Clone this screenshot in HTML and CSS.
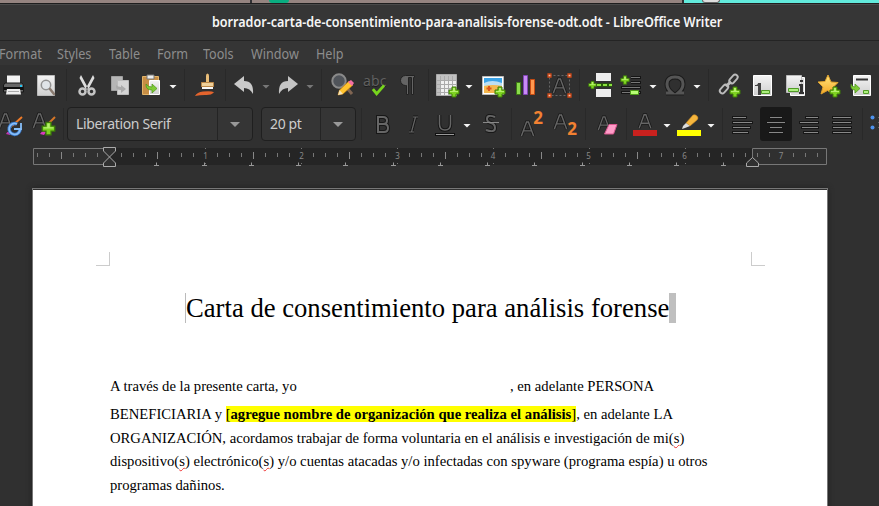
FILE: index.html
```html
<!DOCTYPE html>
<html lang="es">
<head>
<meta charset="utf-8">
<title>borrador-carta-de-consentimiento-para-analisis-forense-odt.odt - LibreOffice Writer</title>
<link rel="stylesheet" href="styles.css">
</head>
<body>
<svg class="defs" width="0" height="0" aria-hidden="true">
  <defs>
    <linearGradient id="paper" x1="0" y1="0" x2="0" y2="1"><stop offset="0" stop-color="#f4f4f4"/><stop offset="1" stop-color="#cfcfcf"/></linearGradient>
    <linearGradient id="gold" x1="0" y1="0" x2="0" y2="1"><stop offset="0" stop-color="#ffe680"/><stop offset="1" stop-color="#f5a623"/></linearGradient>
    <symbol id="plus" viewBox="0 0 12 12"><path d="M4 1h4v3h3v4H8v3H4V8H1V4h3z" fill="#7ed321" stroke="#3c7a08"/><path d="M5 2h2v3h3v1H2V5h3z" fill="#b5f06c"/></symbol>
    <symbol id="letter" viewBox="0 0 16 18"><path d="M1.500 17 7 2h2l5.500 15M4 11.500h8" fill="none" stroke="#191919" stroke-width="3.200"/><path d="M1.500 17 7 2h2l5.500 15M4 11.500h8" fill="none" stroke="#666" stroke-width="1.500"/></symbol>
  </defs>
</svg>
<div class="backdrop"><i class="left"></i><i class="mid"><b></b></i><i class="right"><b></b></i></div>
<header class="title"><span>borrador-carta-de-consentimiento-para-analisis-forense-odt.odt - LibreOffice Writer</span></header>
<nav class="menu"><span>Format</span><span>Styles</span><span>Table</span><span>Form</span><span>Tools</span><span>Window</span><span>Help</span></nav>

<div class="bar standard">
  <svg class="ic" viewBox="0 0 24 24"><path d="M6 2.500h13v8H6z" fill="#f3f3f3"/><path d="M4 10h17l1.500 2v7h-20v-7z" fill="#686868" stroke="#181818"/><path d="M3 14h19v3H3z" fill="#111"/><path d="M19 12h2v2h-2z" fill="#20c4f4"/><path d="M6 16h13l1 5.500H5z" fill="#eee"/><path d="M7 18.500h11" stroke="#aaa"/></svg>
  <svg class="ic" viewBox="0 0 24 24"><path d="M3.500 2.500h17v20h-17z" fill="url(#paper)" stroke="#bbb"/><circle cx="12" cy="12" r="4.700" fill="#e0e4e8" stroke="#929292" stroke-width="1.500"/><path d="m16 16 4 5" stroke="#8a7b70" stroke-width="2.500" stroke-linecap="round"/></svg>
  <i class="sep"></i>
  <svg class="ic" viewBox="0 0 24 24"><path d="M6 2 4.500 5 11 17l2-2zM18 2l1.500 3L13 17l-2-2z" fill="#ddd"/><g fill="none" stroke="#c4c4c4" stroke-width="2.500"><circle cx="7.500" cy="18.500" r="3"/><circle cx="16.500" cy="18.500" r="3"/></g></svg>
  <svg class="ic" viewBox="0 0 24 24"><path d="M3.500 3.500h11v14h-11z" fill="#b6b6b6" stroke="#a0a0a0"/><path d="M9.500 7.500h11v14h-11z" fill="#d4d4d4" stroke="#bbb"/><path d="M8 12v2q0 3 5 3v3l5-4-5-4v2q-3 0-5-2" fill="#aaa"/></svg>
  <svg class="ic" viewBox="0 0 24 24"><path d="M3.500 3.500h16v18h-16z" fill="#c78e45" stroke="#e3b468"/><path d="M8 2h7v4H8z" fill="#eee" stroke="#777"/><path d="M10.500 7.500h10v14h-10z" fill="url(#paper)" stroke="#fff"/><path d="M7 11v1q0 5 6 5v3l5-4.500-5-4.500v3q-4 0-6-3" fill="#7ecb35" stroke="#4c9418" stroke-width=".7"/></svg>
  <i class="arrow"></i><i class="sep"></i>
  <svg class="ic" viewBox="0 0 24 24"><path d="M12 9V3q0-2.500 1.500-2.500T15 3v6z" fill="#e9bd78"/><path d="M7.500 9.500h12v4h-12z" fill="#efd09a" stroke="#bb8747"/><path d="M8 14h11v2H8z" fill="#f7f7f7"/><path d="M1 23q2-4 8-4.500 9-1 11 1-3 3-9 2.500-5 0-10 1z" fill="#e4642d"/></svg>
  <i class="sep"></i>
  <svg class="ic" viewBox="0 0 24 24"><path d="M2 11 12 3v5q10 0 9 13-3-6-9-6v4z" fill="#cacaca"/></svg>
  <i class="arrow dim"></i>
  <svg class="ic" viewBox="0 0 24 24"><path d="M22 11 12 3v5Q2 8 3 21q3-6 9-6v4z" fill="#c4c4c4"/></svg>
  <i class="arrow dim"></i><i class="sep"></i>
  <svg class="ic" viewBox="0 0 24 24"><path d="m16 15 5 6" stroke="#806552" stroke-width="3"/><circle cx="8" cy="8" r="6.700" fill="#50545a" stroke="#8a8a8a" stroke-width="2"/><path d="m7 22 1.500-5L18 8l4 4-10 9z" fill="#ffc32e" stroke="#ba7810" stroke-width=".7"/><path d="m17 9 3-2 3 3-2 3z" fill="#f36fa5"/><path d="m7 22 1.500-5 3.500 4z" fill="#f7e3b8"/></svg>
  <div class="ic spell">abc<svg viewBox="0 0 16 12"><path d="m2 5 4 5 8-9" fill="none" stroke="#77d51d" stroke-width="3"/></svg></div>
  <svg class="ic" viewBox="0 0 24 24"><path d="M18.500 2.500h-9a5 5 0 0 0 0 10h1v9h2v-17h3v17h2v-17h1z" fill="#646464" stroke="#222"/></svg>
  <i class="sep"></i>
  <svg class="ic" viewBox="0 0 24 24"><path d="M1.500 1.500h20v21h-20z" fill="#f0f0f0" stroke="#aaa"/><path d="M2 2h19v5H2zM2 7h3v15H2z" fill="#c1c1c1"/><path d="M1 7.500h20M1 11.500h20M1 15.500h20M1 19.500h20M5.500 3v19M9.500 3v19M13.500 3v19M17.500 3v19" stroke="#aaa"/><use href="#plus" x="13" y="13" width="12" height="12"/></svg>
  <i class="arrow"></i>
  <svg class="ic" viewBox="0 0 24 24"><path d="M1.500 3.500h21v18h-21z" fill="#fff" stroke="#bbb"/><path d="M3 5h18v8H3z" fill="#3ba3e7"/><path d="M3 10q8-4 18 0v3H3z" fill="#bcdff4"/><path d="M3 13q9-2 18 0v7H3z" fill="#f4b84e"/><path d="M8 13v5M5.500 15.500h5" stroke="#dd551c" stroke-width="2"/><use href="#plus" x="13" y="13" width="12" height="12"/></svg>
  <svg class="ic" viewBox="0 0 24 24"><path d="M2.500 9.500h4v12h-4z" fill="#8bdc4c" stroke="#3d7b13"/><path d="M9.500 2.500h4v19h-4z" fill="#c78bf4" stroke="#8145b5"/><path d="M16.500 6.500h4v15h-4z" fill="#ff984f" stroke="#c64b12"/></svg>
  <svg class="ic" viewBox="0 0 24 24"><path d="M2.500 2.500h20v20h-20z" fill="none" stroke="#666" stroke-dasharray="2 2"/><use href="#letter" x="5" y="4" width="15" height="17"/><g fill="#f6c8b3" stroke="#cb4817" stroke-width="1.300"><path d="M1 1h3v3H1zM21 1h3v3h-3zM1 21h3v3H1zM21 21h3v3h-3z"/></g></svg>
  <i class="sep"></i>
  <svg class="ic" viewBox="0 0 24 24"><path d="M7 0h15v8H7zM7 16h15v8H7z" fill="#eee"/><path d="M8 12h15" stroke="#285d08" stroke-width="3.500"/><path d="M8 12h15" stroke="#8ae33d" stroke-width="2" stroke-dasharray="4 2"/><use href="#plus" x="-1" y="7.500" width="9" height="9"/></svg>
  <svg class="ic" viewBox="0 0 24 24"><path d="M12 4.500h10M12 9.500h10M2 14.500h20M2 19.500h20" stroke="#151515" stroke-width="3"/><path d="M12 4.500h9M12 9.500h9M3 14.500h18M3 19.500h18" stroke="#777"/><path d="M11.500 17.500h8v4h-8z" fill="#b8ff75" stroke="#4e9e18"/><use href="#plus" x="1" y="2" width="10" height="10"/></svg>
  <i class="arrow"></i>
  <svg class="ic" viewBox="0 0 24 24"><path d="M3 20h6q-5-4-5-9 0-7 8-7t8 7q0 5-5 9h6" fill="none" stroke="#1c1c1c" stroke-width="5"/><path d="M3 20h6q-5-4-5-9 0-7 8-7t8 7q0 5-5 9h6" fill="none" stroke="#555" stroke-width="3"/></svg>
  <i class="arrow"></i><i class="sep"></i>
  <svg class="ic" viewBox="0 0 24 24"><g fill="none" stroke="#bbb" stroke-width="1.900"><rect x="-5" y="-2.500" width="10" height="5" rx="2.500" transform="translate(15.500 6)rotate(-48)"/><rect x="-5" y="-2.500" width="10" height="5" rx="2.500" transform="translate(6 16)rotate(-48)"/><path d="m8 13.500 5-5" stroke-width="3"/></g><use href="#plus" x="11" y="13" width="12" height="12"/></svg>
  <svg class="ic" viewBox="0 0 24 24"><path d="M3.500 2.500h18v20h-18z" fill="url(#paper)" stroke="#fff"/><path d="M5 12q3 0 3-2h3v12H8v-9H5z" fill="#444"/><path d="M11.500 17.500h8v3h-8z" fill="#adf080" stroke="#519b26"/></svg>
  <svg class="ic" viewBox="0 0 24 24"><path d="M7.500 4.500h14v18h-14z" fill="#ddd" stroke="#fff"/><path d="M3.500 2.500h15v17h-15z" fill="url(#paper)" stroke="#bbb"/><path d="M17 7h3v2h-3zM16 11h4v8h1v2h-5v-2h1v-6h-1z" fill="#333"/><path d="M5.500 15.500h10v3h-10z" fill="#adf080" stroke="#519b26"/></svg>
  <svg class="ic" viewBox="0 0 24 24"><path d="m12 2 3 7 7 .5-5 5 1 7-6.500-4L5 21l2-7-5-5 7-.5z" fill="url(#gold)" stroke="#e0a32d"/><use href="#plus" x="13" y="13" width="12" height="12"/></svg>
  <svg class="ic" viewBox="0 0 24 24"><path d="M4.500 2.500h17v20h-17z" fill="url(#paper)" stroke="#fff"/><path d="M7 6.500h12" stroke="#333" stroke-width="2"/><path d="M2 11q1 3 4 3v-3l5 4.500L6 20v-3q-5 0-4-6" fill="#7ecb35" stroke="#4c9418" stroke-width=".7"/><path d="M14.500 17.500h5v3h-5z" fill="#adf080" stroke="#519b26"/></svg>
</div>

<div class="bar formatting">
  <svg class="ic" viewBox="0 0 24 24"><use href="#letter" x="-2" y="0" width="15" height="17"/><path d="m12 14 10-9" stroke="#ef7b28" stroke-width="2"/><path d="M6 22q2-4 5-2l-1 3z" fill="#c734af"/><path d="M20 16a5.500 5.500 0 1 1-3-4" fill="none" stroke="#3978c9" stroke-width="3.500"/><path d="M20 16a5.500 5.500 0 1 1-3-4M14 17h7v-6" fill="none" stroke="#87bff9" stroke-width="1.800"/></svg>
  <svg class="ic" viewBox="0 0 24 24"><use href="#letter" x="-1" y="0" width="15" height="17"/><path d="m14 13 8-8" stroke="#d67627" stroke-width="2"/><path d="M7 22q2-4 6-2l-2 3z" fill="#d83bbd"/><use href="#plus" x="8" y="9" width="15" height="15"/></svg>
  <i class="sep"></i>
  <div class="combo name"><span>Liberation Serif</span><i class="arrow"></i></div>
  <div class="combo size"><span>20 pt</span><i class="arrow"></i></div>
  <i class="sep"></i>
  <svg class="ic emb" viewBox="0 0 24 24"><path d="M8 5h5q4 0 4 3.500T13 12H8zm0 7h6q4 0 4 4t-4 4H8z" stroke-width="4" stroke="#171717"/><path d="M8 5h5q4 0 4 3.500T13 12H8zm0 7h6q4 0 4 4t-4 4H8z" stroke-width="2"/></svg>
  <svg class="ic emb" viewBox="0 0 24 24"><path d="M12 5h5M8 20h5M14.500 5l-4 15" stroke-width="3" stroke="#171717"/><path d="M12 5h5M8 20h5M14.500 5l-4 15" stroke-width="1.200"/></svg>
  <svg class="ic emb" viewBox="0 0 24 24"><path d="M6.500 3v9q0 6 5.500 6t5.500-6V3" stroke-width="3.500" stroke="#171717"/><path d="M6.500 3v9q0 6 5.500 6t5.500-6V3" stroke-width="1.500"/><path d="M2 22.500h20" stroke="#111" stroke-width="3"/><path d="M3 22.500h18" stroke="#999"/></svg>
  <i class="arrow"></i>
  <svg class="ic emb" viewBox="0 0 24 24"><path d="M16 5q-8-3-8 2 0 3 4 4t4 5q0 5-9 2" stroke-width="4" stroke="#171717"/><path d="M16 5q-8-3-8 2 0 3 4 4t4 5q0 5-9 2" stroke-width="2"/><path d="M4 10.500h16" stroke="#888"/></svg>
  <i class="sep"></i>
  <div class="ic script sup"><svg viewBox="0 0 16 18"><use href="#letter"/></svg><b>2</b></div>
  <div class="ic script sub"><svg viewBox="0 0 16 18"><use href="#letter"/></svg><b>2</b></div>
  <i class="sep"></i>
  <svg class="ic" viewBox="0 0 24 24"><use href="#letter" x="1" y="3" width="14" height="16"/><path d="M13 12.500h8L17.500 22h-9z" fill="#ff9cc8" stroke="#d8578e"/></svg>
  <i class="sep"></i>
  <svg class="ic" viewBox="0 0 24 24"><use href="#letter" x="4" y="1" width="16" height="16"/><path d="M0 18h24v6H0z" fill="#c9211e"/></svg>
  <i class="arrow"></i>
  <svg class="ic" viewBox="0 0 24 24"><path d="M0 18h24v6H0z" fill="#ff0"/><path d="m9 11 7-8q2-1 4 1t0 4l-7 6z" fill="#f6b63d" stroke="#c28422" stroke-width=".6"/><path d="m9 11 4 3-5 2-3 1 1-3z" fill="#ddd"/></svg>
  <i class="arrow"></i><i class="sep"></i>
  <svg class="ic al" viewBox="0 0 24 24"><path class="sh" d="M2 5.500h15M2 10.500h21M2 15.500h19M2 20.500h17"/><path d="M3 5.500h13M3 10.500h19M3 15.500h17M3 20.500h15"/></svg>
  <div class="pressed"><svg class="ic al" viewBox="0 0 24 24"><path class="sh" d="M5 5.500h14M2 10.500h20M5 15.500h14M4 20.500h16"/><path d="M6 5.500h12M3 10.500h18M6 15.500h12M5 20.500h14"/></svg></div>
  <svg class="ic al" viewBox="0 0 24 24"><path class="sh" d="M8 5.500h14M2 10.500h20M4 15.500h18M6 20.500h16"/><path d="M9 5.500h12M3 10.500h18M5 15.500h16M7 20.500h14"/></svg>
  <svg class="ic al" viewBox="0 0 24 24"><path class="sh" d="M2 5.500h20M2 10.500h20M2 15.500h20M2 20.500h20"/><path d="M3 5.500h18M3 10.500h18M3 15.500h18M3 20.500h18"/></svg>
  <i class="sep"></i>
  <svg class="ic" viewBox="0 0 24 24"><circle cx="2.500" cy="5.500" r="2" fill="#4d91ec"/><circle cx="2.500" cy="15.500" r="2" fill="#4d91ec"/><path d="M8 5.500h10M8 10.500h10M8 15.500h10" stroke="#666"/></svg>
</div>

<svg class="ruler" viewBox="0 0 796 20">
  <defs>
    <pattern id="tick" x="4" width="12" height="20" patternUnits="userSpaceOnUse"><path d="M.5 6v4" stroke="#777"/></pattern>
    <pattern id="half" x="28" width="96" height="20" patternUnits="userSpaceOnUse"><path d="M.5 5v7" stroke="#888"/></pattern>
  </defs>
  <path d="M77 1h643v17H77z" fill="#252525"/>
  <path d="M77 1.500H.5v16H77M719.500 12V1.500h74v16H725" fill="none" stroke="#777"/>
  <path d="M3 0h70v20H3zM81 0h710v20H81z" fill="url(#tick)"/>
  <path d="M20 0h50v20H20zM100 0h600v20H100z" fill="url(#half)"/>
  <path d="M121 18.500h5m-2.500-3v3M169 18.500h5m-2.500-3v3M216 18.500h5m-2.500-3v3M263 18.500h5m-2.500-3v3M310 18.500h5m-2.500-3v3M358 18.500h5m-2.500-3v3M405 18.500h5m-2.500-3v3M452 18.500h5m-2.500-3v3M499 18.500h5m-2.500-3v3M547 18.500h5m-2.500-3v3M594 18.500h5m-2.500-3v3M641 18.500h5m-2.500-3v3M688 18.500h5m-2.500-3v3" fill="none" stroke="#999"/>
  <g class="num"><path d="M169 4h8v9h-8zM265 4h8v9h-8zM361 4h8v9h-8zM457 4h8v9h-8zM553 4h8v9h-8zM648 4h8v9h-8z"/><path class="light" d="M744 4h8v9h-8z"/>
  <text x="172.500" y="12">1</text><text x="268.500" y="12">2</text><text x="364.500" y="12">3</text><text x="460" y="12">4</text><text x="555.500" y="12">5</text><text x="651.500" y="12">6</text><text x="748" y="12">7</text></g>
  <path d="M172.500 1v1m0 14v1M268.500 1v1m0 14v1M364.500 1v1m0 14v1M460.500 1v1m0 14v1M556.500 1v1m0 14v1M652.500 1v1m0 14v1" stroke="#777"/>
  <path d="M70.500.500h12V4l-12 12v3.500h12V16L70.500 4z" fill="#303030" stroke="#aaa"/>
  <path d="m719.500 10.500 6 5.500v3.500h-12V16z" fill="#303030" stroke="#aaa"/>
</svg>

<main class="page">
  <div class="corners"><i></i><i></i></div>
  <h1><span>Carta de consentimiento para análisis forense</span><i></i></h1>
  <div class="text">
    <p class="first"><span class="a">A través de la presente carta, yo</span><span class="b">, en adelante PERSONA</span></p>
    <p><span class="c">BENEFICIARIA y <mark>[<b>agregue nombre de organización que realiza el análisis</b>]</mark>, en adelante LA</span></p>
    <p><span class="d">ORGANIZACIÓN, acordamos trabajar de forma voluntaria en el análisis e investigación de mi(<u>s</u>)</span></p>
    <p><span class="e">dispositivo(<u>s</u>) electrónico(<u>s</u>) y/o cuentas atacadas y/o infectadas con spyware (programa espía) u otros</span></p>
    <p><span class="f">programas dañinos.</span></p>
  </div>
</main>
</body>
</html>
```
FILE: styles.css
```css
* { box-sizing: border-box; }
html { overflow: hidden; }
body { margin: 0; width: 879px; height: 506px; overflow: hidden; background: #303030; color: #ccc; font-family: "Noto Sans", sans-serif; display: flex; flex-direction: column; }
body > * { flex-shrink: 0; }
.defs { position: absolute; }
.backdrop { height: 3px; display: flex; background: #303033; gap: 2px; }
.backdrop i { display: block; height: 3px; background: #958480; }
.backdrop b { display: block; height: 3px; }
.backdrop .left { width: 250px; }
.backdrop .mid { width: 430px; padding-left: 17px; }
.backdrop .mid b { width: 20px; background: #09ad80; border-radius: 0 0 6px 6px; }
.backdrop .right { flex: 1; background: #62eadc; padding-left: 18px; }
.backdrop .right b { width: 18px; background: #ddd; border: 1px solid #666; border-top: 0; border-radius: 0 0 4px 4px; }
.title { height: 38px; border-top: 1px solid #1e1e1e; border-bottom: 1px solid #242424; background: #363636; box-shadow: inset 0 1px #4a4a4a; padding-left: 212px; line-height: 36px; font-weight: 600; font-size: 14px; color: #f5f5f5; white-space: nowrap; }
.title span { display: inline-block; transform: scaleX(.897); transform-origin: 0 50%; }
.menu { height: 24px; background: #353535; display: grid; grid-template-columns: 58px 52px 48px 46px 48px 65px 60px; font-size: 14px; line-height: 25px; color: #8d8d8d; }
.menu span { white-space: nowrap; transform: scaleX(.9); transform-origin: 0 50%; margin-left: -1px; }
.bar { display: grid; align-items: center; }
.standard { height: 38px; margin-top: 1px; padding-left: 1px; grid-template-columns: 33px 32px 9px 33px 31px 30px 15px 10px 31px 7px 30px 14px 30px 15px 10px 32px 33px 32px 7px 30px 16px 33px 33px 32px 10px 30px 30px 14px 30px 15px 10px 32px 33px 33px 33px 30px; }
.formatting { height: 38px; margin-top: 1px; grid-template-columns: 33px 30px 4px 194px 100px 9px 31px 32px 30px 16px 32px 8px 34px 32px 11px 30px 7px 30px 14px 30px 15px 8px 30px 37px 33px 32px 8px 9px; }
.ic { display: block; width: 24px; height: 24px; overflow: visible; }
.sep { width: 1px; height: 32px; background: #292929; }
.arrow { width: 8px; height: 4px; margin-top: 3px; background: #f4f4f4; clip-path: polygon(0 0, 100% 0, 50% 100%); }
.arrow.dim { background: #777; }
.spell { font-size: 14px; line-height: 15px; color: #606060; letter-spacing: .2px; text-shadow: 0 1px #1c1c1c; position: relative; }
.spell svg { position: absolute; left: 8px; top: 11px; width: 15px; height: 12px; }
.emb { fill: none; stroke: #666; }
.combo { display: grid; height: 34px; border: 1px solid #1f1f1f; border-radius: 4px; background: #353535; font-size: 14px; line-height: 31px; }
.combo.name { width: 186px; grid-template-columns: 150px 34px; }
.combo.size { width: 95px; grid-template-columns: 59px 34px; }
.combo span { padding-left: 8px; border-right: 1px solid #242424; white-space: nowrap; letter-spacing: -.35px; }
.combo .arrow { width: 10px; height: 5px; margin: 14px 12px; background: #999; }
.script { position: relative; }
.script svg { position: absolute; width: 15px; height: 17px; left: 1px; bottom: -1px; }
.script.sub svg { top: 1px; left: 0; }
.script b { position: absolute; right: 0; top: -2px; font-size: 17px; line-height: 15px; color: #f28132; }
.script.sub b { top: 9px; }
.al { fill: none; stroke: #888; }
.al .sh { stroke: #171717; stroke-width: 3; }
.pressed { width: 32px; height: 34px; background: #191919; border-radius: 3px; display: grid; place-items: center; }
.ruler { width: 796px; height: 20px; margin: 4px 0 0 33px; }
.num path { fill: #252525; }
.num .light { fill: #303030; }
.num text { font: 8px "Noto Sans", sans-serif; fill: #888; text-anchor: middle; }
.page { width: 796px; height: 330px; margin: 21px 0 0 32px; border: 1px solid #777; border-bottom: 0; background: #fff; box-shadow: inset 0 1px #303030, 0 0 5px #202020; color: #000; font-family: "Liberation Serif", serif; }
.corners { display: flex; justify-content: space-between; width: 669px; height: 14px; margin: 63px 0 0 63px; }
.corners i { width: 14px; border: 0 solid #ccc; border-bottom-width: 1px; }
.corners i:first-child { border-right-width: 1px; }
.corners i:last-child { border-left-width: 1px; }
h1 { display: flex; align-items: center; margin: 27px 0 0 152px; height: 30px; border-left: 1px solid #bbb; font-weight: 400; font-size: 26.670px; line-height: 30px; white-space: nowrap; }
h1 span { width: 483px; }
h1 i { width: 7px; height: 30px; background: #bfbfbf; }
.text { margin: 52px 0 0 77px; font-size: 14.670px; line-height: 23.500px; }
p { margin: 0; height: 23.500px; white-space: nowrap; }
p.first { height: 28px; display: flex; }
.a { width: 400px; }
mark { background: #ff0; color: #000; }
u { text-decoration: underline wavy #e33 1px; text-underline-offset: 1px; }
```
